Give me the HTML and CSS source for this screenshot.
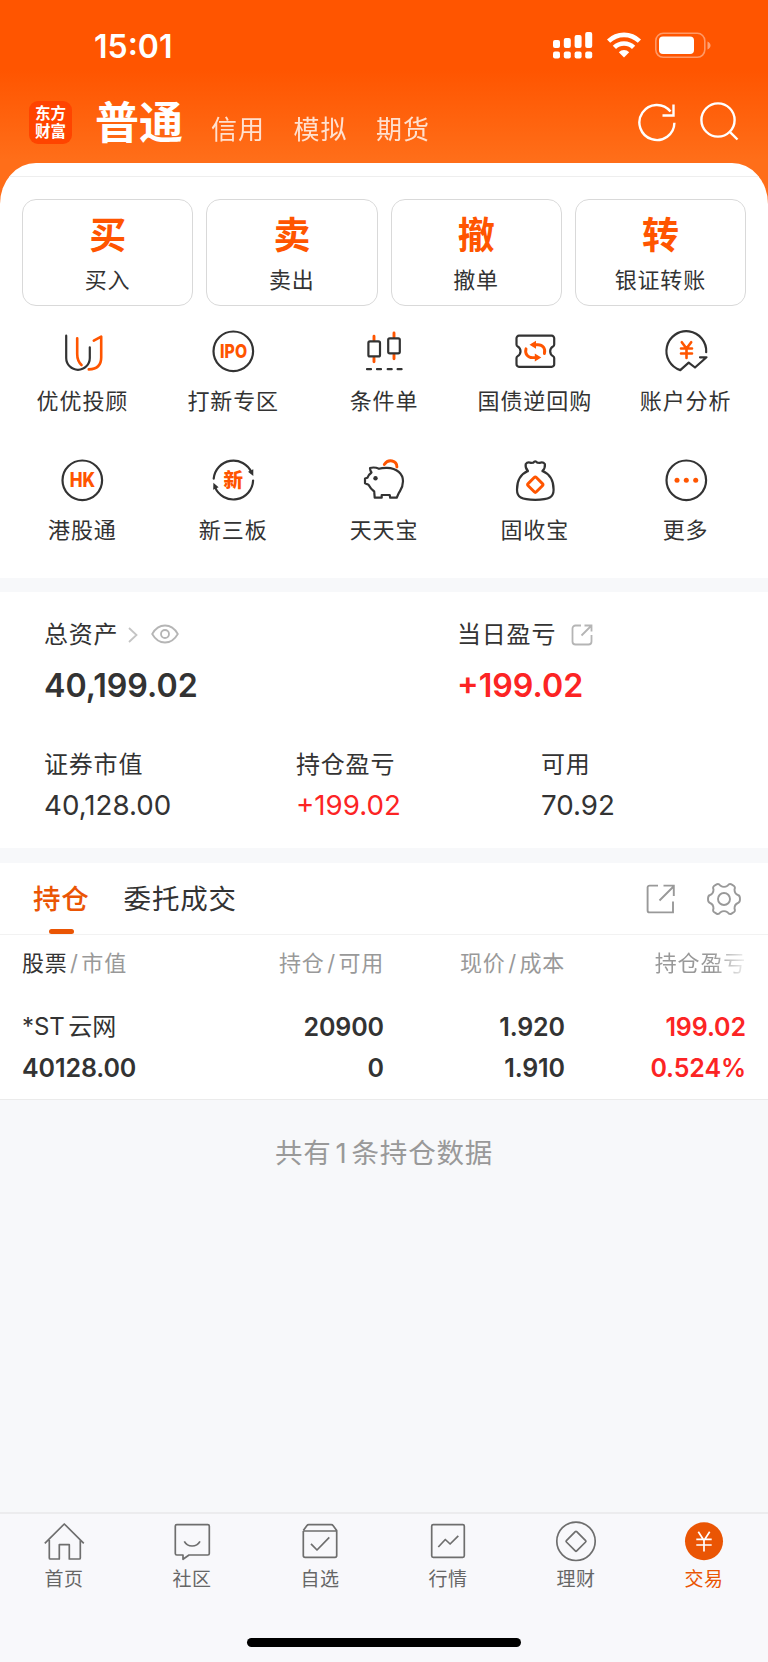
FILE: index.html
```
<!DOCTYPE html>
<html lang="zh-CN">
<head>
  <meta charset="UTF-8" />
  <meta name="viewport" content="width=device-width, initial-scale=1.0" />
  <title>交易</title>
  <link rel="stylesheet" href="styles.css">
</head>
<body>
  <header class="header">
    <div class="status-bar">
      <span class="time">15:01</span>
      <div class="status-icons">
        <svg width="40" height="29" viewBox="0 0 40 29" fill="#fff">
          <rect x="0" y="10" width="7" height="8" rx="2" />
          <rect x="10.8" y="8" width="7" height="10" rx="2" />
          <rect x="21.6" y="5" width="7" height="13" rx="2" />
          <rect x="32.2" y="2" width="7" height="16" rx="2" />
          <rect x="0" y="21.5" width="7" height="7" rx="2" />
          <rect x="10.8" y="21.5" width="7" height="7" rx="2" />
          <rect x="21.6" y="21.5" width="7" height="7" rx="2" />
          <rect x="32.2" y="21.5" width="7" height="7" rx="2" />
        </svg>
        <svg width="34" height="28" viewBox="0 0 34 28" fill="none" stroke="#fff" stroke-width="4.6">
          <path d="M1.6 11.2a22 22 0 0 1 30.8 0" />
          <path d="M7.4 17.4a13.6 13.6 0 0 1 19.2 0" />
          <path d="M17 27.4l-5.2-5.2a7.4 7.4 0 0 1 10.4 0z" fill="#fff" stroke="none" />
        </svg>
        <svg width="56" height="29" viewBox="0 0 56 29">
          <rect x=".8" y="3.3" width="49" height="24" rx="7.5" fill="none" stroke="#fff" stroke-opacity=".4" stroke-width="1.6" />
          <rect x="4" y="6.600" width="35" height="17.4" rx="4" fill="#fff" />
          <path d="M52.500 11.500v8c4-1.500 4-6.500 0-8z" fill="#fff" fill-opacity=".45" />
        </svg>
      </div>
    </div>
    <nav class="account-nav">
      <div class="logo"><span>东方</span><span>财富</span></div>
      <a class="account active">普通</a>
      <a class="account">信用</a>
      <a class="account">模拟</a>
      <a class="account">期货</a>
      <div class="nav-actions">
        <svg width="40" height="40" viewBox="0 0 40 40" fill="none" stroke="#fff" stroke-width="2.4">
          <path d="M37.400 20.700A17.500 17.500 0 1 1 33.500 9.500" />
          <path d="M25.500 13.500H36.500V2.500" />
        </svg>
        <svg width="40" height="40" viewBox="0 0 40 40" fill="none" stroke="#fff" stroke-width="2.4">
          <circle cx="18" cy="18" r="16.600" />
          <path d="M29.300 29.300L37.500 37.500" />
        </svg>
      </div>
    </nav>
  </header>

  <main class="sheet">
    <section class="actions">
      <a class="action"><b>买</b><span>买入</span></a>
      <a class="action"><b>卖</b><span>卖出</span></a>
      <a class="action"><b>撤</b><span>撤单</span></a>
      <a class="action"><b>转</b><span>银证转账</span></a>
    </section>

    <section class="shortcuts">
      <a class="shortcut">
        <svg viewBox="0 0 46 46">
          <path d="M7.200 7.700V30a11.800 11.800 0 0 0 23.600 0V19.300" />
          <path class="hl" d="M18.200 10.300V26q0 7 4.300 11" />
          <path class="hl" d="M34.800 12.700l7.400-4V29.500q0 11.500-12.400 11.900" />
        </svg>
        <span>优优投顾</span>
      </a>
      <a class="shortcut">
        <svg viewBox="0 0 46 46">
          <circle cx="23.300" cy="23.300" r="19.800" />
          <text x="23.600" y="29.900" font-size="19" textLength="27" lengthAdjust="spacingAndGlyphs">IPO</text>
        </svg>
        <span>打新专区</span>
      </a>
      <a class="shortcut">
        <svg viewBox="0 0 46 46">
          <path class="hl thick" d="M13 8.200v4M13 29.800v4M33 5v4M33 26.700v4" />
          <rect x="7.400" y="13.400" width="11.600" height="15" rx="1.500" />
          <rect x="27.200" y="10.300" width="11.600" height="15" rx="1.500" />
          <path d="M6 41.200h4M16 41.200h4M26.700 41.200h4M36.600 41.200h4" />
        </svg>
        <span>条件单</span>
      </a>
      <a class="shortcut">
        <svg viewBox="0 0 46 46">
          <path d="M7 7.700H39.700a2.500 2.500 0 0 1 2.500 2.500V16.500q0 1.500-1.200 2a5.500 5.500 0 0 0 0 9.600q1.200.7 1.200 2V36.300a2.500 2.500 0 0 1-2.500 2.500H7a2.500 2.500 0 0 1-2.500-2.500V30.100q0-1.300 1.200-2a5.500 5.500 0 0 0 0-9.600q-1.200-.5-1.200-2V10.200A2.500 2.500 0 0 1 7 7.700z" />
          <path class="hl thick" d="M32.400 25.500c1.400-5-1.800-8.800-6.400-8.800h-5M14 20.800c-1.400 5 1.800 8.800 6.400 8.800h5" />
          <path class="dot" d="M17.500 16.700l6.500-4v8zM29.300 29.600l-6.500-4v8z" />
        </svg>
        <span>国债逆回购</span>
      </a>
      <a class="shortcut">
        <svg viewBox="0 0 46 46">
          <path d="M43.200 24.200A19.900 19.900 0 1 0 17.300 42.100l8.400-7.500 6.300 4.900 11.500-10.200H37" />
          <path class="hl" d="M18.800 14.200l4.700 6.300 4.700-6.300M23.500 20.500V30M18 20.500h11M18 25.500h11" />
        </svg>
        <span>账户分析</span>
      </a>
      <a class="shortcut">
        <svg viewBox="0 0 46 46">
          <circle cx="23.300" cy="23.300" r="19.800" />
          <text x="23.500" y="30.200" font-size="19.500" textLength="25.500" lengthAdjust="spacingAndGlyphs">HK</text>
        </svg>
        <span>港股通</span>
      </a>
      <a class="shortcut">
        <svg viewBox="0 0 46 46">
          <path d="M3.700 21.700A19.800 19.800 0 0 1 41.500 15.300M43.100 23.500A19.800 19.800 0 0 1 5 30.200" />
          <path class="fill" d="M38 14.800l5.300-2.600v6.800zM8.600 30.200l-5.400 2.600.2-7z" />
          <text x="23.300" y="30.300" font-size="19.500">新</text>
        </svg>
        <span>新三板</span>
      </a>
      <a class="shortcut">
        <svg viewBox="0 0 46 46">
          <path d="M9 11q4.500-1.300 9 .8 3-1 8-.9c10 .2 16 6.100 16 13.400 0 6-2 8-4.300 12l-2 4.400h-6.500l-.5-2.700h-8v2.700h-7l-.5-6.200q-3.500-2.500-5.700-6.700l-3.500-1.600v-4.700l2.500-.8q1-3 4-5.200-1.500-2-1.500-4.500z" />
          <path class="hl thick" d="M23.300 7.500q3-4.500 7.800-3.500t4.800 6" />
          <circle class="fill" cx="14.500" cy="21.200" r="2.200" />
        </svg>
        <span>天天宝</span>
      </a>
      <a class="shortcut">
        <svg viewBox="0 0 46 46">
          <path d="M16 14.100q-3-3-2.300-7 1.800-2.500 5.300-1.200l2.200-.2q2-2.500 4.200 0l2.200.2q3.500-1.300 5.300 1.200.5 4-2.500 7M16 14.100C9 17 5 23.500 5 32.700 5 40 9 42.800 23.300 42.800S41.600 40 41.600 32.700C41.600 23.500 37.500 17 30.400 14.100" />
          <rect class="hl thick" x="17.500" y="21.900" width="11.600" height="11.600" rx="1.500" transform="rotate(45 23.300 27.700)" />
        </svg>
        <span>固收宝</span>
      </a>
      <a class="shortcut">
        <svg viewBox="0 0 46 46">
          <circle cx="23.300" cy="23.300" r="19.800" />
          <g class="dot"><circle cx="14" cy="23.300" r="2.500" /><circle cx="23.300" cy="23.300" r="2.500" /><circle cx="32.700" cy="23.300" r="2.500" /></g>
        </svg>
        <span>更多</span>
      </a>
    </section>
  </main>

  <section class="assets">
    <div class="assets-main">
      <div class="asset">
        <div class="label">总资产
          <svg class="chevron" width="10" height="16" viewBox="0 0 10 16"><path d="M1 1l7.500 7L1 15" /></svg>
          <svg class="eye" width="28" height="20" viewBox="0 0 28 20"><path d="M1.200 10Q6 1.500 14 1.500T26.800 10Q22 18.500 14 18.500T1.200 10z" /><circle cx="14" cy="10" r="4" /></svg>
        </div>
        <div class="total">40,199.02</div>
      </div>
      <div class="asset">
        <div class="label">当日盈亏
          <svg class="share" width="22" height="22" viewBox="0 0 22 22"><path d="M10 1.500H4.500a3 3 0 0 0-3 3v13a3 3 0 0 0 3 3h13a3 3 0 0 0 3-3V11M10.500 11.500L20 2M13.500 1.500h7v6" /></svg>
        </div>
        <div class="total up">+199.02</div>
      </div>
    </div>
    <div class="assets-sub">
      <div class="asset"><div class="label">证券市值</div><div class="value">40,128.00</div></div>
      <div class="asset"><div class="label">持仓盈亏</div><div class="value up">+199.02</div></div>
      <div class="asset"><div class="label">可用</div><div class="value">70.92</div></div>
    </div>
  </section>

  <section class="positions">
    <div class="tabs">
      <a class="tab active">持仓</a>
      <a class="tab">委托成交</a>
      <div class="tab-tools">
        <svg width="30" height="30" viewBox="0 0 30 30"><path d="M12 1.600H3.600a2 2 0 0 0-2 2V26.400a2 2 0 0 0 2 2H27V17.500M13.500 16.500L27.500 2.500M17.500 1.600H27.800V12" /></svg>
        <svg width="34" height="34" viewBox="0 0 34 34">
          <path d="M13.500 3.700Q17 6 20.500 3.700Q22.500 1 24.500 2.400L27 4Q28.500 5.200 27.500 7.500Q27.500 11.700 31 13Q33 13.500 33 17Q33 20.500 31 21Q27.500 22.300 27.500 26.500Q28.500 28.800 27 30L24.500 31.600Q22.500 33 20.500 30.300Q17 28 13.500 30.300Q11.500 33 9.500 31.600L7 30Q5.500 28.800 6.500 26.500Q6.500 22.300 3 21Q1 20.500 1 17Q1 13.500 3 13Q6.500 11.700 6.500 7.500Q5.500 5.200 7 4L9.500 2.400Q11.500 1 13.500 3.700z" />
          <circle cx="17" cy="17" r="6" />
        </svg>
      </div>
    </div>
    <div class="row head">
      <div><em>股票</em><i>/</i>市值</div>
      <div>持仓<i>/</i>可用</div>
      <div>现价<i>/</i>成本</div>
      <div class="fade">持仓盈亏</div>
    </div>
    <div class="row">
      <div><span class="name">*ST 云网</span><span>40128.00</span></div>
      <div><span>20900</span><span>0</span></div>
      <div><span>1.920</span><span>1.910</span></div>
      <div class="up"><span>199.02</span><span>0.524%</span></div>
    </div>
  </section>
  <p class="summary">共有<span>1</span>条持仓数据</p>

  <footer class="tabbar">
    <nav class="menu">
      <a class="item">
        <svg viewBox="0 0 44 44"><path d="M2.800 24.300L22.300 5l19.500 19.300M7.300 21V39q0 1 1 1h9V25.700h10V40h10q1 0 1-1V21" /></svg>
        <span>首页</span>
      </a>
      <a class="item">
        <svg viewBox="0 0 44 44"><path d="M6.800 5.700h31q1.500 0 1.500 1.500V34.500q0 1.500-1.500 1.500H19L13 40.300V36H6.800q-1.500 0-1.500-1.500V7.200q0-1.500 1.500-1.500zM14.300 22.300q2.500 4.700 7.800 4.700t7.900-4.700" /></svg>
        <span>社区</span>
      </a>
      <a class="item">
        <svg viewBox="0 0 44 44"><path d="M5.300 12V36.500q0 1.800 1.800 1.800H37q1.700 0 1.700-1.800V11.500l-3.500-4.800q-.7-1-2-1H10.800q-1.300 0-2 1L5.300 11.500M5.300 12H38.700M13 24.800l6 6.200 12.300-12.700" /></svg>
        <span>自选</span>
      </a>
      <a class="item">
        <svg viewBox="0 0 44 44"><rect x="5.700" y="5.700" width="32.600" height="32.600" rx="1.500" /><path d="M12.300 28l7-7.500 4.800 4.500 8.200-8.200" /></svg>
        <span>行情</span>
      </a>
      <a class="item">
        <svg viewBox="0 0 44 44"><circle cx="22" cy="22.300" r="19.200" /><rect x="14.700" y="15" width="14.600" height="14.600" rx="1" transform="rotate(45 22 22.300)" /></svg>
        <span>理财</span>
      </a>
      <a class="item active">
        <svg viewBox="0 0 44 44"><circle cx="22" cy="22.300" r="19" /><path d="M16.300 12.800L22 21.500l5.700-8.700M22 21.500V32.500M14.300 20.300h15.400M14.300 26h15.400" /></svg>
        <span>交易</span>
      </a>
    </nav>
    <div class="home-indicator"></div>
  </footer>
</body>
</html>
```

FILE: styles.css
```
* {
  margin: 0;
  padding: 0;
  box-sizing: border-box;
}
body {
  width: 768px;
  height: 1662px;
  display: flex;
  flex-direction: column;
  font-family: Inter, "Noto Sans CJK SC", sans-serif;
  font-size: 22px;
  color: #333;
  background: #f7f8fa;
}
svg {
  display: block;
  flex: none;
}
.up {
  color: #fc2424;
}

/* Header */
.header {
  height: 205px;
  background: linear-gradient(#ff5500 0, #ff5500 70px, #ff6e19 160px);
}
.status-bar {
  height: 93px;
  padding: 0 57px 0 94px;
  display: flex;
  align-items: center;
  justify-content: space-between;
  color: #fff;
}
.time {
  font-size: 32px;
  font-weight: 600;
}
.status-icons {
  display: flex;
  gap: 14px;
  padding-bottom: 5px;
}
.account-nav {
  height: 59px;
  padding: 0 28px 0 29px;
  display: flex;
  align-items: center;
  color: #fff;
}
.logo {
  width: 43px;
  height: 43px;
  margin-right: 23px;
  border-radius: 9px;
  background: #ff4400;
  display: flex;
  flex-direction: column;
  align-items: center;
  justify-content: center;
  font-size: 15.5px;
  font-weight: 700;
  line-height: 18px;
}
.account {
  margin-right: 28.5px;
  padding-top: 9px;
  font-size: 26px;
  letter-spacing: 1px;
  opacity: 0.8;
}
.account.active {
  margin-right: 28px;
  padding-top: 0;
  padding-bottom: 6px;
  font-size: 44px;
  font-weight: 700;
  letter-spacing: 0;
  opacity: 1;
}
.nav-actions {
  margin-left: auto;
  margin-top: -2px;
  display: flex;
  gap: 23px;
}

/* White sheet that overlaps the header */
.sheet {
  height: 415px;
  margin-top: -42px;
  background: #fff;
  border-radius: 36px 36px 0 0 / 41px 41px 0 0;
  overflow: hidden;
}
.sheet::before {
  content: "";
  display: block;
  height: 1px;
  margin-top: 13px;
  background: #eee;
}
.actions {
  display: grid;
  grid-template-columns: repeat(4, 1fr);
  gap: 13px;
  padding: 22px 22px 0;
}
.action {
  height: 107px;
  padding-top: 12px;
  border: 1px solid #d9d9d9;
  border-radius: 14px;
  text-align: center;
  letter-spacing: 0.8px;
}
.action b {
  display: block;
  font-size: 37px;
  line-height: 48px;
  letter-spacing: 0;
  color: #ff5500;
}
.action span {
  display: block;
  line-height: 41px;
}
.shortcuts {
  display: grid;
  grid-template-columns: repeat(5, 1fr);
  padding: 22px 7px 0;
}
.shortcut {
  height: 129px;
  display: flex;
  flex-direction: column;
  align-items: center;
  letter-spacing: 0.9px;
}
.shortcut span {
  margin-top: 12px;
  line-height: 30px;
}
.shortcut svg {
  width: 46px;
  height: 46px;
  fill: none;
  stroke: #333;
  stroke-width: 2.2;
  stroke-linecap: round;
  stroke-linejoin: round;
}
.shortcut .hl {
  stroke: #ff5500;
  stroke-width: 2.6;
}
.shortcut .thick {
  stroke-width: 2.9;
}
.shortcut .fill {
  fill: #333;
  stroke: none;
}
.shortcut .dot {
  fill: #ff5500;
  stroke: none;
}
.shortcut text {
  fill: #ff5500;
  stroke: none;
  font-weight: 800;
  letter-spacing: 0;
  text-anchor: middle;
}

/* Assets */
.assets {
  height: 256px;
  margin-top: 14px;
  padding: 25px 44px 0;
  background: #fff;
}
.assets-main {
  display: grid;
  grid-template-columns: 413px 1fr;
}
.assets-sub {
  display: grid;
  grid-template-columns: 252px 245px 1fr;
  margin-top: 41px;
}
.label {
  display: flex;
  align-items: center;
  font-size: 24px;
  line-height: 36px;
  letter-spacing: 0.8px;
}
.label svg {
  fill: none;
  stroke: #b5b5b5;
  stroke-width: 1.8;
}
.label .chevron {
  margin-left: 10px;
  stroke: #c4c4c4;
}
.label .eye {
  margin-left: 13px;
  margin-top: -2px;
}
.label .share {
  margin-left: 15px;
}
.total {
  margin-top: 13px;
  font-size: 32.2px;
  font-weight: 600;
  line-height: 40px;
}
.value {
  margin-top: 4px;
  font-size: 27.7px;
  line-height: 36px;
}

/* Positions */
.positions {
  margin-top: 15px;
  height: 237px;
  background: #fff;
  border-bottom: 1px solid #ebebeb;
}
.tabs {
  height: 72px;
  padding: 0 27px 0 33px;
  border-bottom: 1px solid #f2f2f2;
  display: flex;
}
.tab {
  position: relative;
  margin-right: 34px;
  font-size: 27.5px;
  line-height: 72px;
  letter-spacing: 0.8px;
}
.tab.active {
  color: #ea5504;
  font-weight: 500;
}
.tab.active::after {
  content: "";
  position: absolute;
  left: 16px;
  bottom: 0;
  width: 25px;
  height: 5px;
  border-radius: 3px;
  background: #ea5504;
}
.tab-tools {
  margin-left: auto;
  display: flex;
  align-items: center;
  gap: 31px;
}
.tab-tools svg {
  fill: none;
  stroke: #999;
  stroke-width: 1.9;
}
.row {
  display: grid;
  grid-template-columns: 180px 182px 181px 181px;
  padding: 0 22px;
  font-size: 25px;
  font-weight: 600;
  line-height: 40.5px;
  letter-spacing: -0.1px;
  text-align: right;
}
.row > div:first-child {
  text-align: left;
}
.row span {
  display: block;
}
.row .name {
  font-size: 24px;
  font-weight: 400;
  word-spacing: -3px;
}
.row.head {
  height: 72px;
  font-size: 22px;
  font-weight: 400;
  line-height: 57px;
  letter-spacing: 0.8px;
  color: #999;
}
.head em {
  font-style: normal;
  color: #333;
}
.head i {
  font-style: normal;
  margin: 0 2.5px;
}
.head .fade {
  -webkit-mask-image: linear-gradient(to right, #000 82%, rgba(0, 0, 0, 0.15) 100%);
  mask-image: linear-gradient(to right, #000 82%, rgba(0, 0, 0, 0.15) 100%);
}
.summary {
  margin-top: 33px;
  font-size: 27.5px;
  line-height: 41px;
  letter-spacing: 0.8px;
  text-align: center;
  color: #999;
}
.summary span {
  margin: 0 4px;
}

/* Bottom tab bar */
.tabbar {
  height: 150px;
  margin-top: auto;
  padding-top: 5px;
  background: #f8f8fb;
  border-top: 2px solid #ececee;
}
.menu {
  display: grid;
  grid-template-columns: repeat(6, 1fr);
}
.item {
  display: flex;
  flex-direction: column;
  align-items: center;
  font-size: 19px;
  line-height: 34px;
  letter-spacing: 0.6px;
  color: #666;
}
.item svg {
  width: 44px;
  height: 44px;
  fill: none;
  stroke: #6e6e6e;
  stroke-width: 1.7;
  stroke-linejoin: round;
}
.item.active {
  color: #ea5504;
}
.item.active circle {
  fill: #ea5504;
  stroke: none;
}
.item.active path {
  stroke: #fff;
}
.home-indicator {
  width: 274px;
  height: 9px;
  margin: 41px auto 0;
  border-radius: 5px;
  background: #000;
}
```
